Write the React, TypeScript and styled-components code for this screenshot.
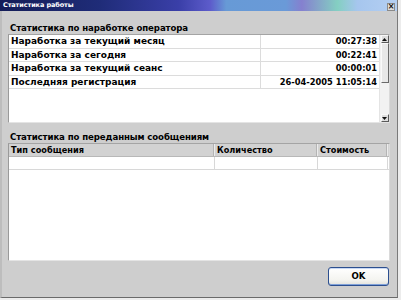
import React from "react";
import styled, { createGlobalStyle } from "styled-components";

const GlobalStyle = createGlobalStyle`
  html, body { margin: 0; padding: 0; background: #ececec; }
  * { box-sizing: border-box; }
`;

const Window = styled.div`
  width: 398px;
  height: 298px;
  background: #cecece;
  border-left: 2px solid #bdbdbd;
  border-right: 1px solid #7a7a7a;
  border-bottom: 1px solid #6a6a6a;
  display: flex;
  flex-direction: column;
  font-family: "DejaVu Sans", Verdana, sans-serif;
  color: #000;
`;

const TitleBar = styled.div`
  height: 11px;
  margin-left: -2px;
  display: flex;
  align-items: center;
  padding: 0 2px 0 3px;
  background: linear-gradient(
    90deg,
    #141d58 0%,
    #1f2c78 25%,
    #3a3fa8 45%,
    #5d5ccb 53%,
    #679ad6 57%,
    #6a9ad8 72%,
    #8580cf 76%,
    #84cfc2 85%,
    #a6c6ee 90%,
    #b4cff2 100%
  );
`;

const TitleText = styled.span`
  color: #fff;
  font-size: 6.5px;
  font-weight: bold;
  letter-spacing: -0.1px;
  line-height: 11px;
`;

const CloseButton = styled.div`
  margin-left: auto;
  width: 8px;
  height: 8px;
  margin-top: 2px;
  background: #dcdcdc;
  border: 1px solid #8a8a8a;
  display: flex;
  align-items: center;
  justify-content: center;
  font-size: 8px;
  line-height: 8px;
  color: #111;
  font-weight: bold;
`;

const Content = styled.div`
  flex: 1;
  display: flex;
  flex-direction: column;
  padding: 0 6px 0 6px;
`;

const SectionTitle = styled.div<{ $top: number }>`
  margin-top: ${(p) => p.$top}px;
  height: 12px;
  line-height: 12px;
  font-size: 8.6px;
  font-weight: bold;
  letter-spacing: -0.1px;
  padding-left: 2px;
  white-space: nowrap;
`;

const Panel = styled.div<{ $height: number }>`
  height: ${(p) => p.$height}px;
  background: #fff;
  border-top: 1px solid #a4a4a4;
  border-left: 1px solid #9a9a9a;
  border-right: 1px solid #dadada;
  border-bottom: 1px solid #e4e4e4;
  display: flex;
  margin-right: 1px;
`;

const StatTable = styled.div`
  flex: 1;
  display: flex;
  flex-direction: column;
`;

const StatRow = styled.div`
  display: grid;
  grid-template-columns: 251px 1fr;
  height: 13.5px;
  border-bottom: 1px solid #dcdcdc;
`;

const Cell = styled.div<{ $value?: boolean }>`
  font-size: ${(p) => (p.$value ? "8.3px" : "9px")};
  font-weight: bold;
  line-height: 12.5px;
  padding: 0 2px;
  text-align: ${(p) => (p.$value ? "right" : "left")};
  white-space: nowrap;
  overflow: hidden;
  & + & {
    border-left: 1px solid #dcdcdc;
  }
`;

const ScrollBar = styled.div`
  width: 10px;
  display: flex;
  flex-direction: column;
  justify-content: space-between;
  align-items: center;
  background: #f2f2f2;
  border-left: 1px solid #e4e4e4;
`;

const ScrollButton = styled.div`
  width: 8px;
  height: 8px;
  background: #dedede;
  border-right: 1px solid #5a5a5a;
  border-bottom: 1px solid #5a5a5a;
  border-top: 1px solid #f8f8f8;
  border-left: 1px solid #f8f8f8;
  display: flex;
  align-items: center;
  justify-content: center;
`;

const Thumb = styled.div`
  width: 8px;
  flex: 0 0 40px;
  background: #e8e8e8;
  border-right: 1px solid #6a6a6a;
  border-bottom: 1px solid #6a6a6a;
  border-top: 1px solid #fafafa;
  border-left: 1px solid #fafafa;
`;

const ScrollTop = styled.div`
  display: flex;
  flex-direction: column;
  align-items: center;
`;

const MsgTable = styled.div`
  flex: 1;
  display: flex;
  flex-direction: column;
`;

const MsgRow = styled.div<{ $header?: boolean }>`
  display: grid;
  grid-template-columns: 206px 103px 70px;
  height: 13px;
  background: ${(p) => (p.$header ? "#d2d2d2" : "#fff")};
  border-bottom: 1px solid ${(p) => (p.$header ? "#b8b8b8" : "#d8d8d8")};
`;

const MsgCell = styled.div<{ $header?: boolean }>`
  font-size: 8.2px;
  font-weight: bold;
  line-height: 12px;
  padding: 0 2px;
  white-space: nowrap;
  overflow: hidden;
  border-right: 1px solid ${(p) => (p.$header ? "#ececec" : "#d8d8d8")};
  ${(p) => (p.$header ? "box-shadow: inset -1px 0 0 #b4b4b4;" : "")}
`;

const Footer = styled.div`
  display: flex;
  justify-content: flex-end;
  padding: 6px 2px 0 0;
`;

const OkButton = styled.button`
  width: 61px;
  height: 19px;
  border: 1px solid #2c4f8f;
  border-radius: 3px;
  background: linear-gradient(#ffffff, #f4f4f0 70%, #e2e2dc);
  box-shadow: inset 0 -1px 0 #7fa0d8, inset 0 1px 0 #c8d8f4;
  font-family: "DejaVu Sans", Verdana, sans-serif;
  font-size: 8.6px;
  font-weight: bold;
  color: #000;
  padding: 0;
  line-height: 17px;
`;

const Arrow = ({ up }: { up?: boolean }) => (
  <svg width="5" height="3" viewBox="0 0 5 3">
    <path d={up ? "M2.5 0 L5 3 L0 3 Z" : "M0 0 L5 0 L2.5 3 Z"} fill="#111" />
  </svg>
);

const stats = [
  ["Наработка за текущий месяц", "00:27:38"],
  ["Наработка за сегодня", "00:22:41"],
  ["Наработка за текущий сеанс", "00:00:01"],
  ["Последняя регистрация", "26-04-2005 11:05:14"],
];

export default function App() {
  return (
    <>
      <GlobalStyle />
      <Window>
        <TitleBar>
          <TitleText>Статистика работы</TitleText>
          <CloseButton>×</CloseButton>
        </TitleBar>
        <Content>
          <SectionTitle $top={11}>Статистика по наработке оператора</SectionTitle>
          <Panel $height={89}>
            <StatTable>
              {stats.map(([k, v]) => (
                <StatRow key={k}>
                  <Cell>{k}</Cell>
                  <Cell $value>{v}</Cell>
                </StatRow>
              ))}
            </StatTable>
            <ScrollBar>
              <ScrollTop>
                <ScrollButton>
                  <Arrow up />
                </ScrollButton>
                <Thumb />
              </ScrollTop>
              <ScrollButton>
                <Arrow />
              </ScrollButton>
            </ScrollBar>
          </Panel>
          <SectionTitle $top={8}>Статистика по переданным сообщениям</SectionTitle>
          <Panel $height={118}>
            <MsgTable>
              <MsgRow $header>
                <MsgCell $header>Тип сообщения</MsgCell>
                <MsgCell $header>Количество</MsgCell>
                <MsgCell $header>Стоимость</MsgCell>
              </MsgRow>
              <MsgRow>
                <MsgCell />
                <MsgCell />
                <MsgCell />
              </MsgRow>
            </MsgTable>
          </Panel>
          <Footer>
            <OkButton>OK</OkButton>
          </Footer>
        </Content>
      </Window>
    </>
  );
}
